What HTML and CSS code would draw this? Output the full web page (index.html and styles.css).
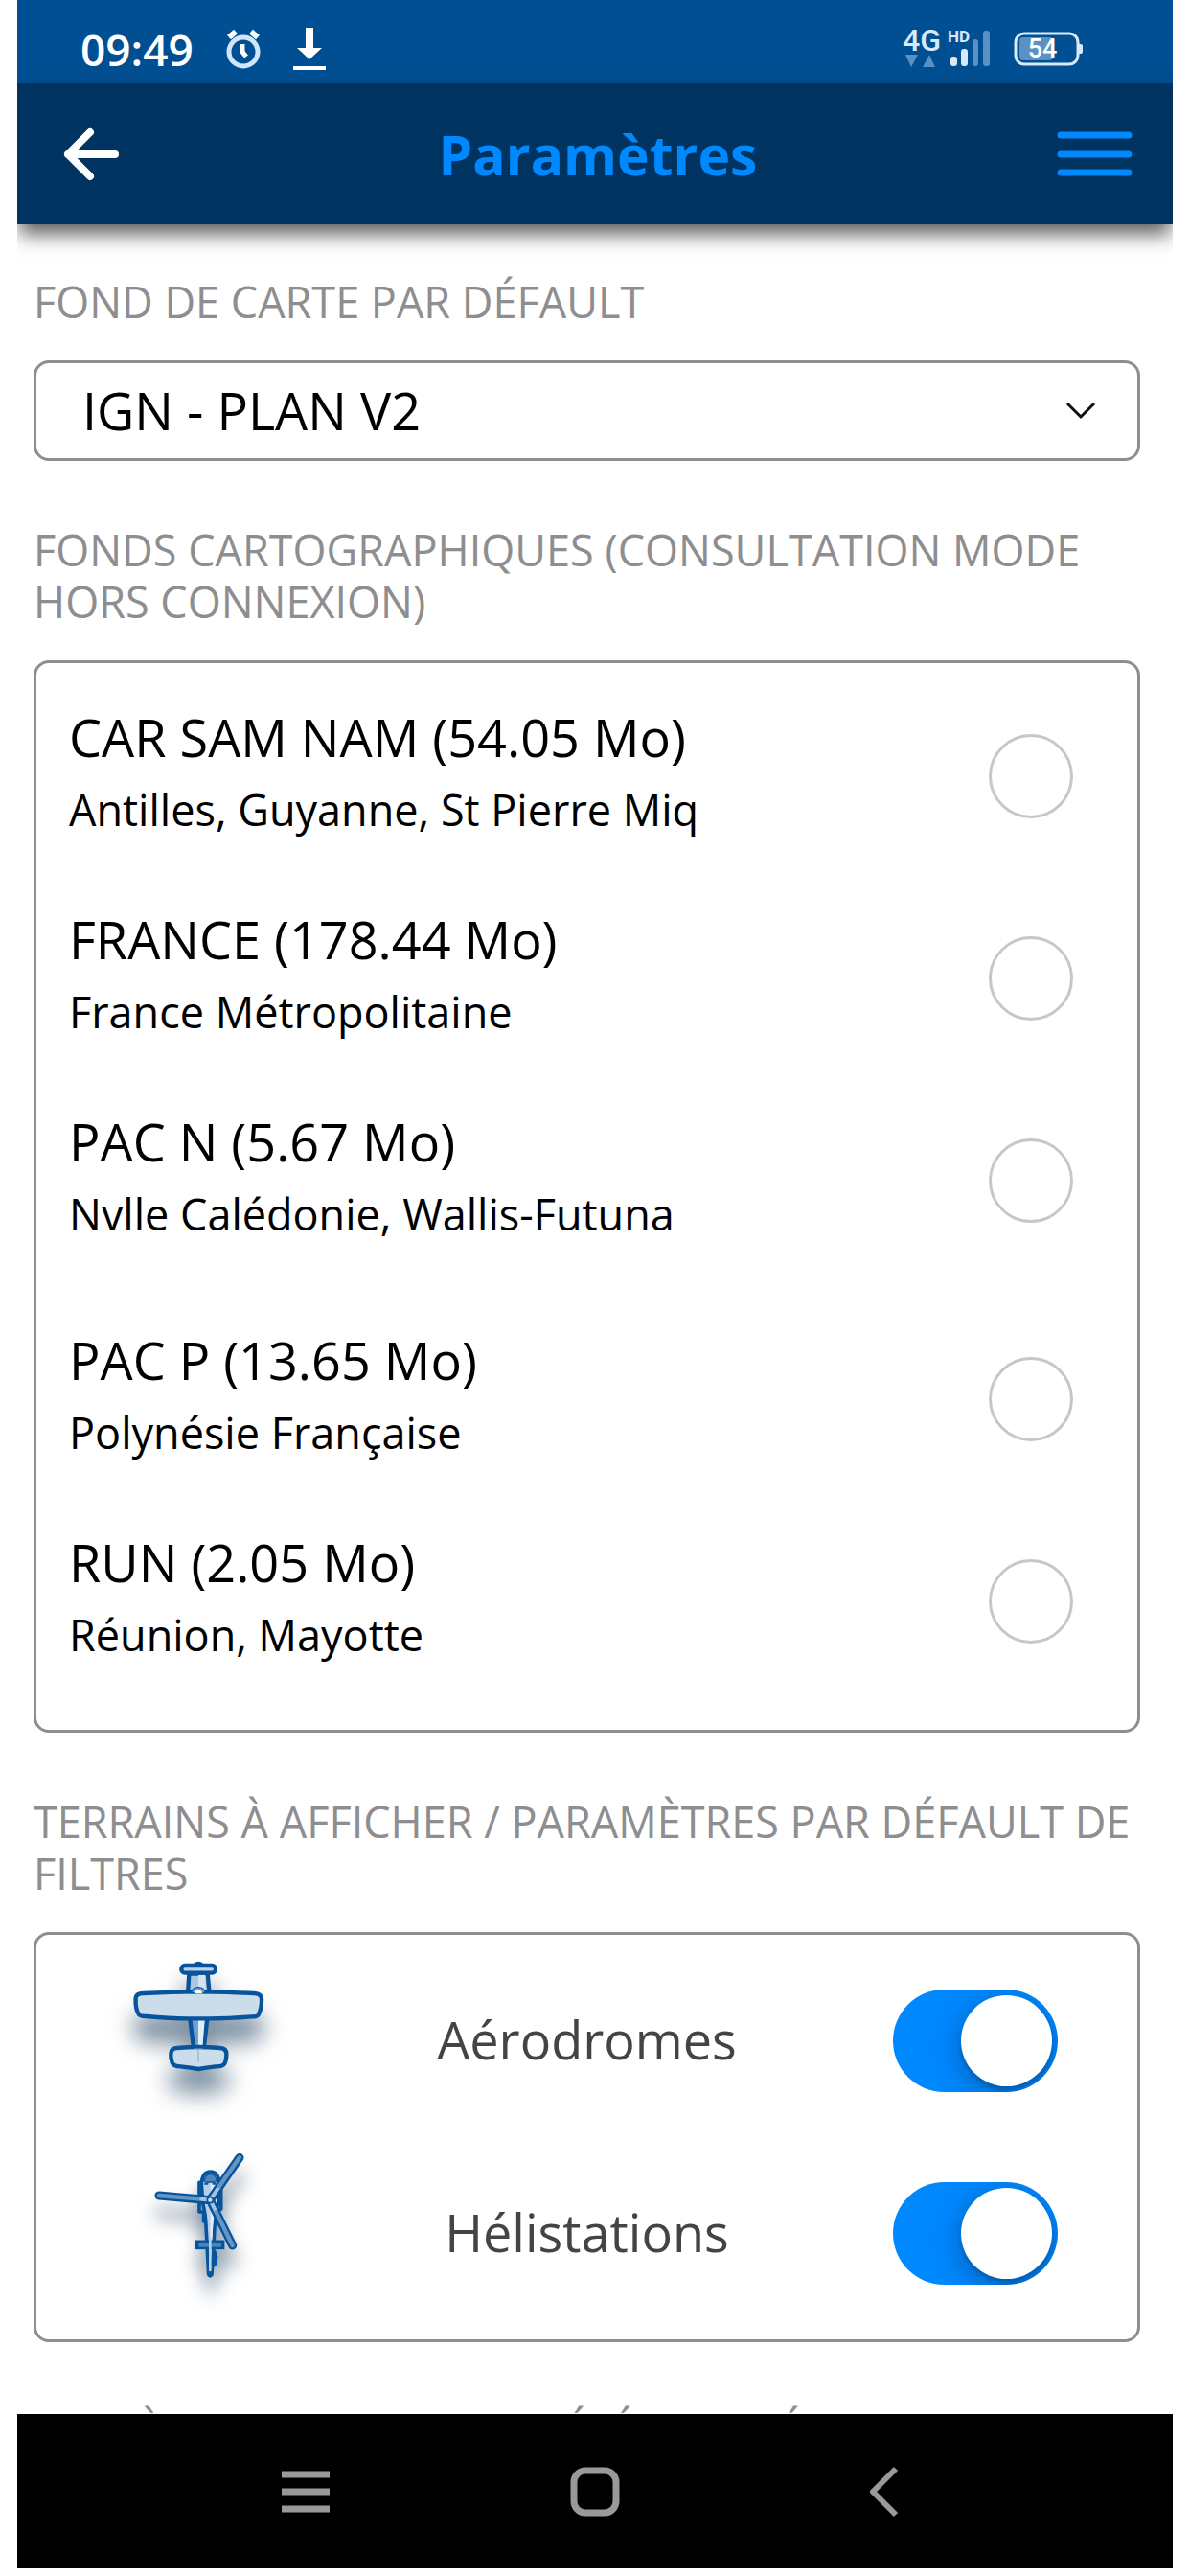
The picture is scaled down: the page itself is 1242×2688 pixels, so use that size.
FILE: index.html
```html
<!DOCTYPE html>
<html lang="fr">

<head>
    <meta charset="UTF-8">
    <meta name="viewport" content="width=device-width, initial-scale=1.0">
    <title>Paramètres</title>
    <link rel="stylesheet" href="styles.css">
</head>

<body>
    <div class="app">
        <!-- Phone status bar -->
        <div class="status-bar">
            <span class="clock">09:49</span>
            <svg class="alarm" width="36" height="44" viewBox="0 0 36 44" fill="none">
                <circle cx="18" cy="25" r="15" stroke="#d3e5f8" stroke-width="5" />
                <path d="M3 10L10 4M33 10L26 4" stroke="#fff" stroke-width="6" />
                <path d="M17 17v8l4 5" stroke="#fff" stroke-width="5" />
            </svg>
            <svg class="download" width="34" height="46" viewBox="0 0 34 46" fill="#fff">
                <path d="M13 1h8v21h9L17 34 4 22h9zM0 41h34v4H0z" />
            </svg>
            <svg class="signal" width="92" height="44" viewBox="0 0 92 44" fill="#d9e9f8">
                <text x="0" y="24" class="network">4G</text>
                <text x="47" y="15" class="hd">HD</text>
                <path d="M3 28h13L9 41zM21 41h13l-6 -13z" fill="#5a90c2" />
                <rect x="50" y="30" width="7" height="10" rx="3" />
                <rect x="61" y="22" width="7" height="18" rx="3" />
                <rect x="73" y="12" width="6" height="28" rx="3" fill="#5a90c2" />
                <rect x="84" y="3" width="7" height="37" rx="3" fill="#5a90c2" />
            </svg>
            <svg class="battery" width="72" height="36" viewBox="0 0 72 36">
                <rect x="6" y="6" width="35" height="24" rx="4" fill="#5a90c2" />
                <rect x="2" y="2" width="65" height="32" rx="9" fill="none" stroke="#d9e9f8" stroke-width="3" />
                <path d="M68 13h2q2 0 2 2v6q0 2 -2 2h-2z" fill="#d9e9f8" />
                <text x="30" y="27" text-anchor="middle" class="level">54</text>
            </svg>
        </div>

        <header class="header">
            <button class="icon-button" aria-label="Retour">
                <svg width="60" height="56" viewBox="0 0 60 56" fill="none" stroke="#fff" stroke-width="8" stroke-linecap="round" stroke-linejoin="round">
                    <path d="M28 5L5 28l23 23M5 28h49" />
                </svg>
            </button>
            <h1>Paramètres</h1>
            <button class="icon-button" aria-label="Menu">
                <svg width="80" height="56" viewBox="0 0 80 56" fill="none" stroke="#0088ff" stroke-width="7" stroke-linecap="round">
                    <path d="M5 8h71M5 28h71M5 47h71" />
                </svg>
            </button>
        </header>

        <main class="content">
            <section class="section">
                <h2><label for="base-map">FOND DE CARTE PAR DÉFAULT</label></h2>
                <div class="select-box">
                    <select id="base-map">
                        <option>IGN - PLAN V2</option>
                    </select>
                    <svg class="chevron" width="30" height="20" viewBox="0 0 30 20" fill="none" stroke="#111" stroke-width="3">
                        <path d="M1 2l14 14L29 2" />
                    </svg>
                </div>
            </section>

            <section class="section">
                <h2>FONDS CARTOGRAPHIQUES (CONSULTATION MODE HORS CONNEXION)</h2>
                <div class="box maps">
                    <label class="map">
                        <span class="map-text">
                            <span class="map-name">CAR SAM NAM (54.05 Mo)</span>
                            <span class="map-area">Antilles, Guyanne, St Pierre Miq</span>
                        </span>
                        <input type="checkbox">
                    </label>
                    <label class="map">
                        <span class="map-text">
                            <span class="map-name">FRANCE (178.44 Mo)</span>
                            <span class="map-area">France Métropolitaine</span>
                        </span>
                        <input type="checkbox">
                    </label>
                    <label class="map">
                        <span class="map-text">
                            <span class="map-name">PAC N (5.67 Mo)</span>
                            <span class="map-area">Nvlle Calédonie, Wallis-Futuna</span>
                        </span>
                        <input type="checkbox">
                    </label>
                    <label class="map map-group">
                        <span class="map-text">
                            <span class="map-name">PAC P (13.65 Mo)</span>
                            <span class="map-area">Polynésie Française</span>
                        </span>
                        <input type="checkbox">
                    </label>
                    <label class="map">
                        <span class="map-text">
                            <span class="map-name">RUN (2.05 Mo)</span>
                            <span class="map-area">Réunion, Mayotte</span>
                        </span>
                        <input type="checkbox">
                    </label>
                </div>
            </section>

            <section class="section">
                <h2>TERRAINS À AFFICHER / PARAMÈTRES PAR DÉFAULT DE FILTRES</h2>
                <div class="box filters">
                    <label class="filter">
                        <svg class="plane" width="170" height="201" viewBox="123 120 510 603" stroke="#07549c" stroke-width="13" stroke-linejoin="round">
                            <path d="M352 212L348 275h68L410 212z" fill="#a9c8e6" />
                            <path d="M381 215h22v58h-22z" fill="#d5e3f1" stroke="none" />
                            <rect x="328" y="186" width="107" height="23" rx="11" fill="#bcd4eb" />
                            <path d="M370 184q12 -8 22 0" fill="none" />
                            <path d="M354 345L366 445h32L410 345z" fill="#6ea1d3" />
                            <path d="M381 350h20L394 447H381z" fill="#e3edf6" stroke="none" />
                            <path d="M208 273Q381 263 556 273Q578 274 579 290Q580 318 569 340Q565 347 548 346Q470 352 415 352H350Q290 352 217 345Q196 345 193 336Q183 318 185 287Q187 274 208 273z" fill="#cbdceb" />
                            <path d="M359 272q3 -18 22 -18t22 18z" fill="#6ea1d3" stroke-width="4" />
                            <path d="M368 274l6 -10h15l6 10z" fill="#fff" stroke="none" />
                            <path d="M313 444Q381 438 449 444Q469 445 469 463Q469 483 463 493Q457 503 435 502Q405 506 382 510Q357 506 326 502Q304 502 299 490Q294 477 295 461Q297 445 313 444z" fill="#cbdceb" />
                            <path d="M366 447h30M381 449v40" stroke="#8aa9c7" stroke-width="3" />
                        </svg>
                        <span class="filter-name">Aérodromes</span>
                        <input type="checkbox" class="toggle" checked>
                    </label>
                    <label class="filter">
                        <svg class="helicopter" width="170" height="201" viewBox="123 723 510 603" stroke="#07549c" stroke-linejoin="round" stroke-linecap="round">
                            <path d="M384 865v92h14v30M452 865v84h-10" fill="none" stroke-width="11" />
                            <path d="M425 1075q18 8 12 35q0 15 -12 18" fill="#07549c" stroke-width="7" />
                            <path d="M391 870Q393 831 419 831Q445 831 447 870L443 930Q433 960 430 1040L423 1153Q418 1162 413 1153L405 1000Q403 960 395 930z" fill="#b7d0e8" stroke-width="11" />
                            <path d="M420 868h22l-3 60q-10 30 -14 100l-7 100z" fill="#e5eef7" stroke="none" />
                            <path d="M399 861q3 -22 20 -22t20 22l-8 3h-24z" fill="#4f87bd" stroke-width="4" />
                            <path d="M403 869h6M428 869h6" stroke-width="7" />
                            <path d="M372 1060h91" stroke-width="29" stroke-linecap="butt" />
                            <path d="M382 1060h71" stroke="#4d83b5" stroke-width="14" stroke-linecap="butt" />
                            <path d="M418 1040v100" stroke="#b7d0e8" stroke-width="8" />
                            <path d="M258 906L418 920M418 920L510 787M418 920L488 1062" fill="none" stroke-width="27" />
                            <path d="M418 920L380 916M418 920L447 877M418 920L437 958" stroke="#a6c3df" stroke-width="12" />
                            <path d="M258 906L380 916M447 877L510 787M437 958L488 1062" fill="none" stroke="#6695c2" stroke-width="13" />
                            <circle cx="418" cy="920" r="9" fill="#cbdceb" stroke-width="5" />
                        </svg>
                        <span class="filter-name">Hélistations</span>
                        <input type="checkbox" class="toggle" checked>
                    </label>
                </div>
            </section>

            <section class="section">
                <h2>MODÈLES DES TERRAINS TÉLÉCHARGÉS</h2>
            </section>
        </main>

        <!-- Phone navigation buttons -->
        <nav class="nav-bar">
            <button aria-label="Applications récentes">
                <svg width="52" height="52" viewBox="0 0 52 52" fill="none" stroke="#999" stroke-width="7" stroke-linecap="butt">
                    <path d="M1 8h50M1 26h50M1 44h50" />
                </svg>
            </button>
            <button aria-label="Accueil">
                <svg width="52" height="52" viewBox="0 0 52 52" fill="none" stroke="#999" stroke-width="7">
                    <rect x="4" y="4" width="44" height="44" rx="12" />
                </svg>
            </button>
            <button aria-label="Précédent">
                <svg width="52" height="52" viewBox="0 0 52 52" fill="none" stroke="#999" stroke-width="6" stroke-linejoin="round">
                    <path d="M38 2L14 26l24 24" />
                </svg>
            </button>
        </nav>
    </div>
</body>

</html>
```
FILE: styles.css
```css
* {
    box-sizing: border-box;
}

body {
    margin: 0;
    padding: 0 18px 8px;
    background-color: white;
    font-family: "Open Sans", "Noto Sans", sans-serif;
    color: #000;
}

button {
    background: none;
    border: none;
    padding: 0;
}

svg {
    display: block;
    overflow: visible;
}

.app {
    display: flex;
    flex-direction: column;
    height: calc(100vh - 8px);
    overflow: hidden;
}

/* status bar */
.status-bar {
    display: flex;
    align-items: center;
    flex: none;
    height: 87px;
    padding: 14px 94px 0 66px;
    background-color: #004f93;
    color: white;
}

.clock {
    font-size: 46px;
    font-weight: 600;
    line-height: 54px;
}

.alarm {
    margin-left: 34px;
}

.download {
    margin-left: 34px;
}

.signal {
    margin-left: auto;
}

.battery {
    margin-left: 24px;
}

.network {
    font: 500 32px Roboto, sans-serif;
}

.hd {
    font: 700 17px Roboto, sans-serif;
}

.level {
    font: 500 27px Roboto, sans-serif;
    fill: white;
}

/* page header */
.header {
    display: flex;
    align-items: center;
    justify-content: space-between;
    flex: none;
    position: relative;
    z-index: 1;
    height: 147px;
    padding: 0 42px 0 48px;
    background-color: #003360;
    box-shadow: 0 12px 20px -2px rgba(0, 0, 0, 0.65);
}

.header h1 {
    margin: 0;
    font-size: 57px;
    font-weight: 700;
    line-height: 76px;
    color: #0088ff;
}

.icon-button {
    display: flex;
    width: 80px;
}

/* settings */
.content {
    flex: 1;
    min-height: 0;
    overflow-y: auto;
    scrollbar-width: none;
    padding: 0 34px 0 17px;
}

.section {
    margin-top: 66px;
}

.section:first-child {
    margin-top: 54px;
}

.section h2 {
    margin: 0 0 34px;
    font-size: 45px;
    font-weight: 400;
    line-height: 54px;
    color: #8e8e90;
}

.box,
.select-box {
    border: 3px solid #8e8e8e;
    border-radius: 16px;
}

.select-box {
    position: relative;
}

.select-box select {
    display: block;
    appearance: none;
    width: 100%;
    height: 99px;
    padding: 0 48px 2px;
    border: none;
    background: none;
    font-family: inherit;
    font-size: 54px;
    color: #000;
}

.chevron {
    position: absolute;
    right: 44px;
    top: 40px;
    pointer-events: none;
}

.maps {
    padding: 12px 67px 29px 34px;
}

.map {
    display: flex;
    align-items: center;
    justify-content: space-between;
    min-height: 211px;
}

.map-group {
    margin-top: 17px;
}

.map-text {
    padding-bottom: 6px;
}

.map-name,
.map-area {
    display: block;
}

.map-name {
    font-size: 54px;
    line-height: 76px;
}

.map-area {
    font-size: 45px;
    line-height: 76px;
}

.map input {
    appearance: none;
    flex: none;
    width: 88px;
    height: 88px;
    margin: 0;
    border: 3px solid #c7c7c7;
    border-radius: 50%;
}

.filters {
    padding: 10px 83px;
}

.filter {
    display: grid;
    grid-template-columns: 1fr auto 1fr;
    align-items: center;
    height: 201px;
}

.filter-name {
    padding-bottom: 4px;
    font-size: 54px;
    line-height: 76px;
    color: #444;
}

.plane {
    filter: drop-shadow(0 24px 12px rgba(10, 45, 80, 0.55));
}

.helicopter {
    filter: drop-shadow(0 18px 10px rgba(10, 45, 80, 0.55));
}

.toggle {
    appearance: none;
    justify-self: end;
    width: 172px;
    height: 107px;
    margin: 0;
    padding: 6px;
    border-radius: 54px;
    background-color: #ccc;
    overflow: hidden;
}

.toggle::before {
    content: "";
    display: block;
    width: 95px;
    height: 95px;
    border-radius: 50%;
    background-color: white;
    box-shadow: 0 8px 32px rgba(0, 0, 0, 0.3), 0 4px 4px rgba(0, 0, 0, 0.15);
}

.toggle:checked {
    background-color: #0088ff;
}

.toggle:checked::before {
    margin-left: auto;
}

/* navigation bar */
.nav-bar {
    display: flex;
    align-items: center;
    justify-content: center;
    gap: 200px;
    flex: none;
    height: 161px;
    background-color: black;
}

.nav-bar button {
    display: flex;
    justify-content: center;
    width: 102px;
}
```
